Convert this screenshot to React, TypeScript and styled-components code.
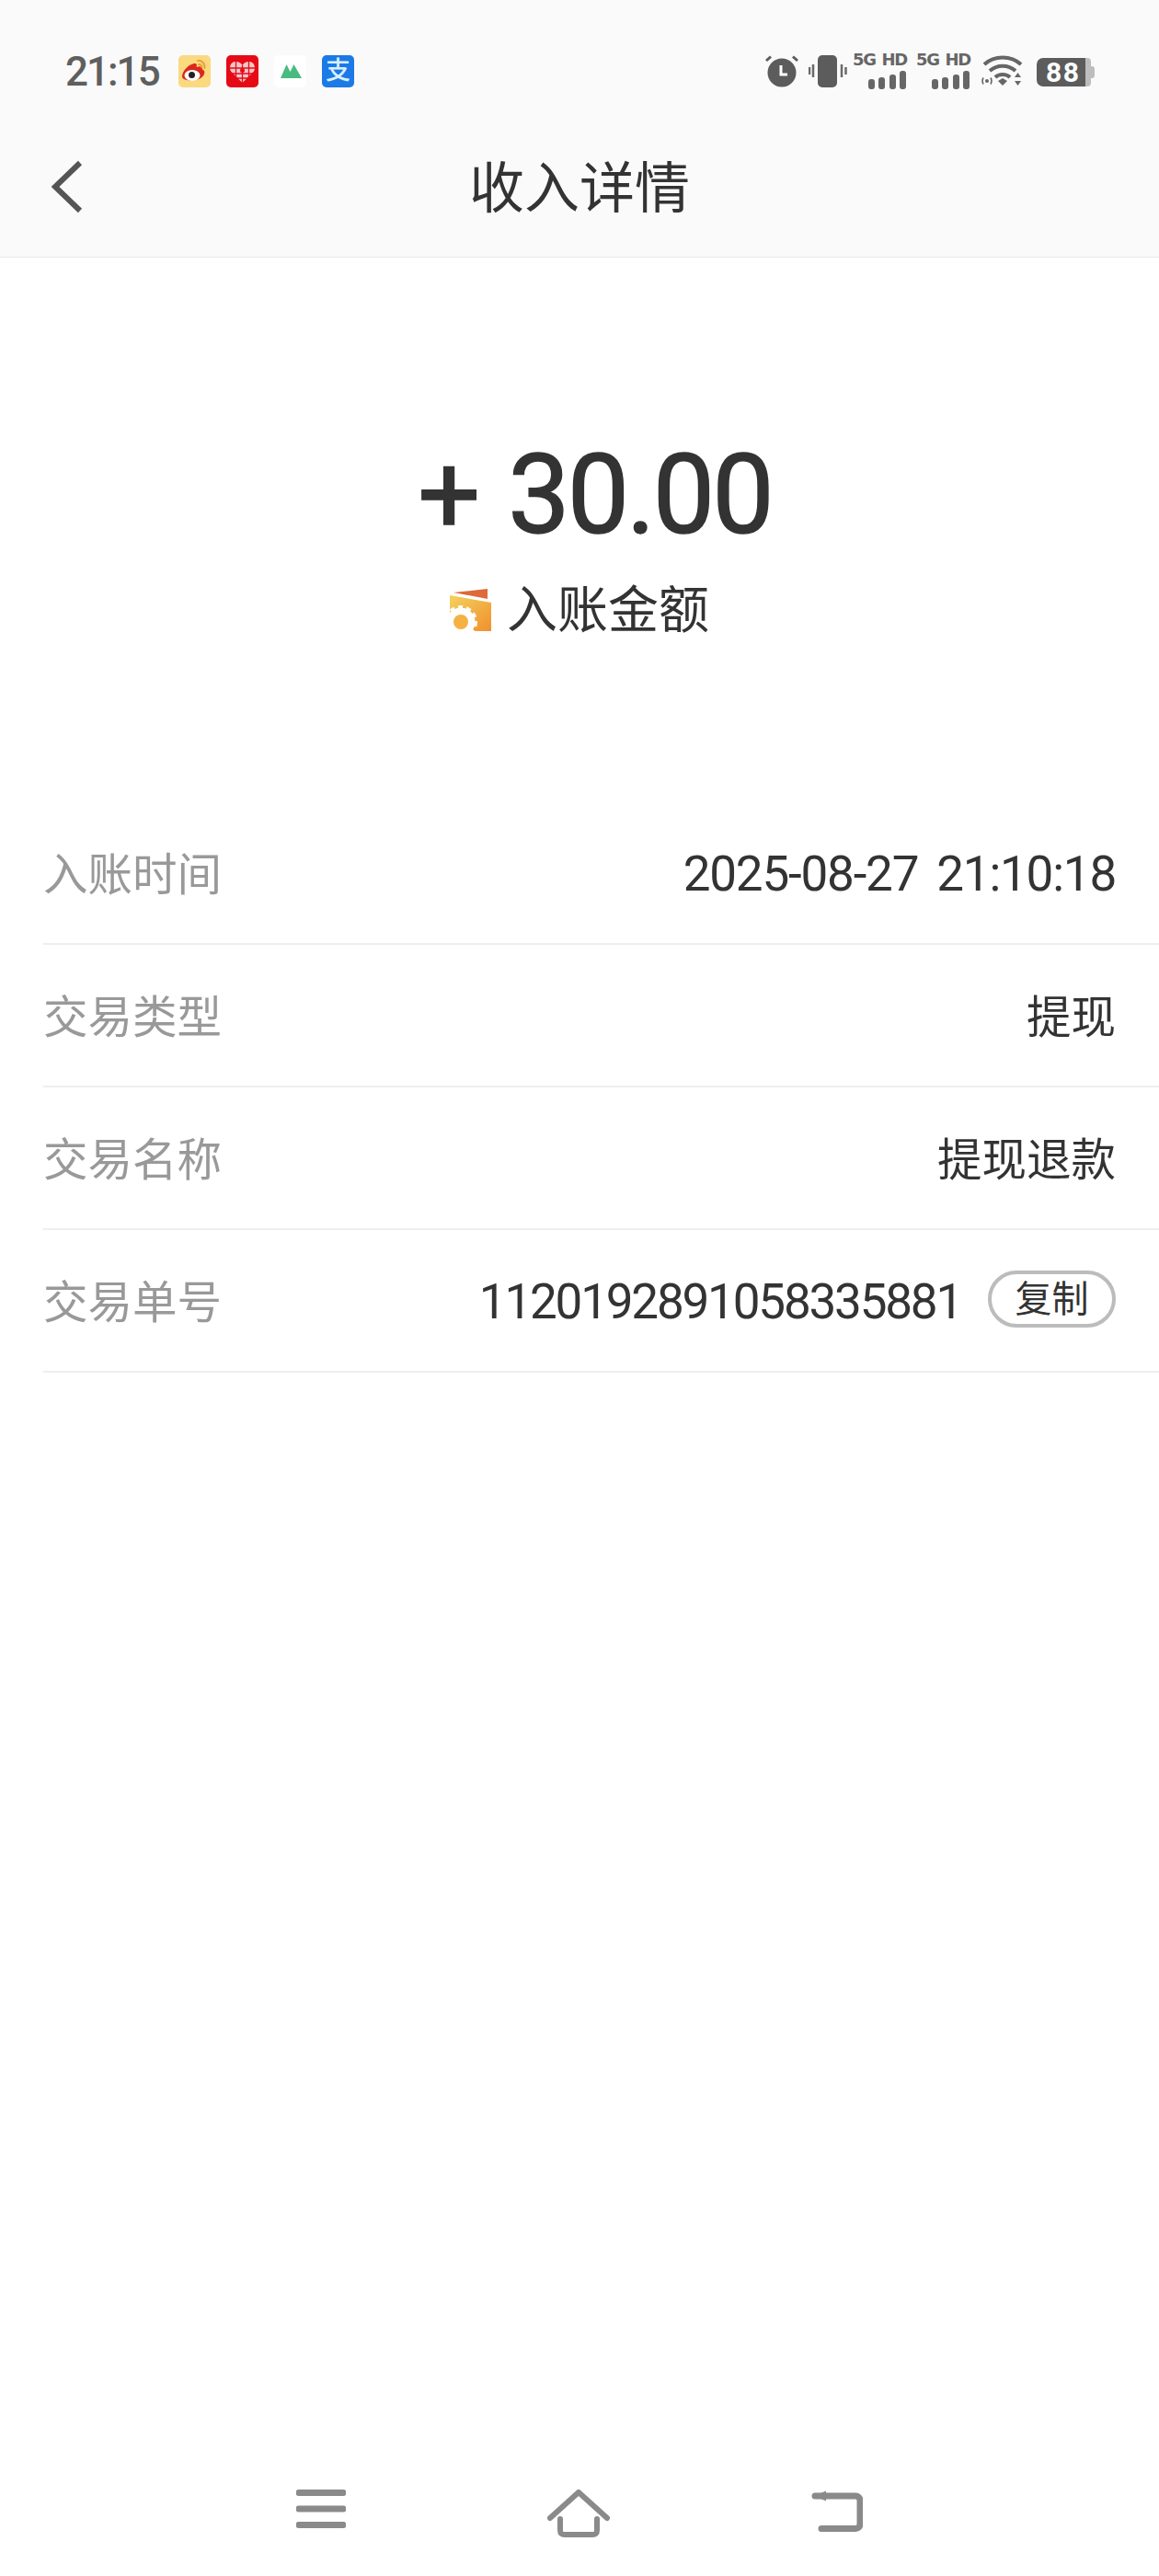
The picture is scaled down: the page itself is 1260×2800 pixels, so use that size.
import React from 'react';
import styled, { createGlobalStyle } from 'styled-components';

const GlobalStyle = createGlobalStyle`
  html, body {
    margin: 0;
    padding: 0;
    background: #ffffff;
  }
  * {
    box-sizing: border-box;
  }
`;

const FONT = `Roboto, "Noto Sans CJK SC", sans-serif`;

const Page = styled.div`
  width: 1260px;
  height: 2800px;
  display: flex;
  flex-direction: column;
  background: #ffffff;
  font-family: ${FONT};
  color: #333333;
`;

const Header = styled.header`
  height: 280px;
  background: #fafafa;
  border-bottom: 1px solid #e9e9e9;
  display: flex;
  flex-direction: column;
`;

const StatusBar = styled.div`
  height: 156px;
  padding: 56px 70px 0 71px;
  display: flex;
  align-items: flex-start;
  justify-content: space-between;
`;

const StatusGroup = styled.div`
  display: flex;
  align-items: flex-start;
`;

const Clock = styled.span`
  width: 123px;
  font-size: 44px;
  line-height: 44px;
  font-weight: 500;
  color: #5f5f5f;
  letter-spacing: -2px;
`;

const AppIcons = styled.div`
  display: flex;
  gap: 17px;
  margin-top: 4px;
`;

const AppIcon = styled.svg`
  width: 35px;
  height: 35px;
  display: block;
`;

const AlipayIcon = styled.div`
  width: 35px;
  height: 35px;
  border-radius: 5px;
  background: #1b7ae6;
  color: #d9efff;
  font-size: 27px;
  line-height: 34px;
  font-weight: 500;
  text-align: center;
`;

const SysIcons = styled.div`
  display: flex;
  align-items: flex-start;
  gap: 11px;
`;

const SysIcon = styled.svg<{ $pull?: number }>`
  display: block;
  margin-top: 4px;
  margin-right: ${(props) => props.$pull || 0}px;
`;

const Signal = styled.div`
  width: 58px;
  display: flex;
  flex-direction: column;
  align-items: flex-end;
`;

const SignalLabel = styled.span`
  font-family: "DejaVu Sans", sans-serif;
  font-size: 18px;
  line-height: 17px;
  font-weight: 700;
  color: #666666;
  letter-spacing: -1.3px;
  white-space: nowrap;
  word-spacing: 2px;
`;

const SignalBars = styled.svg`
  display: block;
  margin-top: 4px;
`;

const Battery = styled.div`
  width: 59px;
  height: 31px;
  margin: 7px 4px 0 3px;
  position: relative;
  border-radius: 7px 4px 4px 7px;
  background: linear-gradient(to right, #5c5c5c 90%, #bdbdbd 90%);
  color: #ffffff;
  font-size: 30px;
  line-height: 31px;
  font-weight: 700;
  padding-left: 10px;
  letter-spacing: 1.5px;

  &::after {
    content: '';
    position: absolute;
    right: -4px;
    top: 9px;
    width: 4px;
    height: 13px;
    border-radius: 0 3px 3px 0;
    background: #bdbdbd;
  }
`;

const NavBar = styled.div`
  flex: 1;
  position: relative;
  display: flex;
  align-items: center;
  justify-content: center;
  padding-bottom: 24px;
`;

const BackButton = styled.svg`
  position: absolute;
  left: 54px;
  top: 17px;
`;

const Title = styled.h1`
  margin: 0;
  font-size: 60px;
  line-height: 70px;
  font-weight: 400;
  color: #333333;
`;

const Summary = styled.section`
  height: 590px;
  padding-top: 198px;
  display: flex;
  flex-direction: column;
  align-items: center;
`;

const Amount = styled.div`
  padding-left: 33px;
  font-size: 120px;
  line-height: 120px;
  font-weight: 400;
  letter-spacing: -3px;
  word-spacing: 6px;
  -webkit-text-stroke: 1.4px #333333;
  color: #333333;
  white-space: pre;
`;

const AmountLabel = styled.div`
  margin-top: 29px;
  display: flex;
  align-items: center;
  gap: 16px;
  font-size: 55px;
  line-height: 72px;
`;

const DetailList = styled.section`
  padding-left: 47px;
  padding-top: 2px;
`;

const DetailRow = styled.div`
  height: 155px;
  padding-right: 47px;
  padding-bottom: 3px;
  border-bottom: 2px solid #eeeeee;
  display: flex;
  align-items: center;
  justify-content: space-between;
`;

const DetailLabel = styled.span`
  font-size: 48.5px;
  color: #999999;
`;

const DetailValue = styled.div`
  display: flex;
  align-items: center;
  gap: 29px;
  font-size: 48.5px;
  color: #333333;
`;

const NumberText = styled.span<{ $spacing: number; $wordGap?: number }>`
  font-size: 53px;
  line-height: 62px;
  padding-top: 6px;
  letter-spacing: ${(props) => props.$spacing}px;
  word-spacing: ${(props) => props.$wordGap || 0}px;
`;

const CopyButton = styled.button`
  width: 139px;
  height: 62px;
  padding: 2px 0 0;
  border: 4px solid #bcbcbc;
  border-radius: 31px;
  background: #ffffff;
  font-family: ${FONT};
  font-size: 40px;
  line-height: 52px;
  color: #333333;
`;

const BottomNav = styled.nav`
  margin-top: auto;
  height: 94px;
  display: flex;
  align-items: flex-start;
  justify-content: center;
  gap: 219px;
`;

const NavIcon = styled.svg`
  display: block;
  color: #8a8a8a;
`;

const WeiboIcon = () => (
  <AppIcon viewBox="0 0 35 35">
    <rect width="35" height="35" rx="5" fill="#fbd97f" />
    <path d="M4 23c0-6 7-13 13-14 3-.5 3.500 2 2.500 4 4-1.500 7-.5 6.500 2.500 2 1 3 2.500 2 5-1.500 4-7 7-13 7-6 0-11-1-11-4.500z" fill="#d9291c" />
    <ellipse cx="15" cy="22" rx="8.500" ry="6" fill="#ffffff" />
    <circle cx="14.500" cy="21.500" r="3.500" fill="#222222" />
    <path d="M21 6c4-1 8 3 7.500 8M22 10c2-.5 3.500 1 3.500 3.500" fill="none" stroke="#e9a13a" strokeWidth="2" strokeLinecap="round" />
  </AppIcon>
);

const PddIcon = () => (
  <AppIcon viewBox="0 0 35 35">
    <rect width="35" height="35" rx="5" fill="#e60a16" />
    <path d="M17.500 30 5 17.500C2.500 13 5 7 10 7c3.500 0 6 1.500 7.500 4 1.500-2.500 4-4 7.500-4 5 0 7.500 6 5 10.500z" fill="#f6c6c8" />
    <path d="M10.500 7v17M17.500 11v19M24.500 7v17M4 14h27M5 20h25M10 25h15" stroke="#e60a16" strokeWidth="1.300" fill="none" />
    <circle cx="17.500" cy="16.500" r="2.500" fill="#e60a16" />
  </AppIcon>
);

const PeakIcon = () => (
  <AppIcon viewBox="0 0 35 35">
    <rect width="35" height="35" rx="5" fill="#ffffff" />
    <path d="M7 25 13.500 10 17.500 18 21.500 10 30 25z" fill="#49bb7f" />
  </AppIcon>
);

const WalletIcon = () => (
  <svg width="46" height="46" viewBox="0 0 46 46" style={{ display: 'block' }}>
    <defs>
      <linearGradient id="walletBody" x1="0" y1="0" x2="1" y2="1">
        <stop offset="0" stopColor="#f4d25e" />
        <stop offset="1" stopColor="#f0902e" />
      </linearGradient>
    </defs>
    <path d="M4 4 41 0v11z" fill="#dd6a38" />
    <path d="M0 7 45 15v31H0z" fill="url(#walletBody)" />
    <circle cx="12" cy="36" r="13" fill="#fefefe" stroke="#fefefe" strokeWidth="5" />
    <circle cx="12" cy="36" r="16" fill="none" stroke="#fefefe" strokeWidth="4" strokeDasharray="5 4" />
    <circle cx="12" cy="36" r="8" fill="#f4b144" />
  </svg>
);

const SignalStack = () => (
  <Signal>
    <SignalLabel>5G HD</SignalLabel>
    <SignalBars width="42" height="20" viewBox="0 0 42 20">
      <rect x="0" y="9" width="7" height="11" rx="3" fill="#666666" />
      <rect x="11" y="7" width="7" height="13" rx="3" fill="#666666" />
      <rect x="23" y="4" width="7" height="16" rx="3" fill="#666666" />
      <rect x="34" y="0" width="7" height="20" rx="3" fill="#666666" />
    </SignalBars>
  </Signal>
);

export default function App() {
  return (
    <Page>
      <GlobalStyle />
      <Header>
        <StatusBar>
          <StatusGroup>
            <Clock>21:15</Clock>
            <AppIcons>
              <WeiboIcon />
              <PddIcon />
              <PeakIcon />
              <AlipayIcon>支</AlipayIcon>
            </AppIcons>
          </StatusGroup>
          <SysIcons>
            <SysIcon width="36" height="35" viewBox="0 0 36 35">
              <circle cx="18" cy="19" r="15.500" fill="#5c5c5c" />
              <path d="M1 6 6 1.500M35 6 30 1.500" stroke="#5c5c5c" strokeWidth="3" />
              <path d="M17 11v10h7" fill="none" stroke="#ffffff" strokeWidth="3" />
            </SysIcon>
            <SysIcon width="42" height="35" viewBox="0 0 42 35" $pull={-4}>
              <rect x="10" y="0" width="21" height="35" rx="5" fill="#5c5c5c" />
              <path d="M5 10v14M1 13v8M36 10v14M40.500 13v8" stroke="#6a6a6a" strokeWidth="2.500" />
            </SysIcon>
            <SignalStack />
            <SignalStack />
            <SysIcon width="47" height="35" viewBox="0 0 47 35">
              <path d="M4 10C15 0 33 0 44 10M10 17C18 10 30 10 38 17M16 24C20 20 28 20 32 24" fill="none" stroke="#666666" strokeWidth="4" />
              <path d="M19 28 24 25 29 28 24 33z" fill="#666666" />
              <path d="M37 24 40.500 19 44 24zM37 28H44L40.500 33z" fill="#666666" />
              <circle cx="7" cy="28" r="2" fill="#666666" />
              <path d="M3 24.500C1.500 27 1.500 29 3 31.500M11 24.500C12.500 27 12.500 29 11 31.500" fill="none" stroke="#666666" strokeWidth="1.500" />
            </SysIcon>
            <Battery>88</Battery>
          </SysIcons>
        </StatusBar>
        <NavBar>
          <BackButton width="38" height="60" viewBox="0 0 38 60">
            <path d="M33 4 6 30l27 26" fill="none" stroke="#555555" strokeWidth="6" />
          </BackButton>
          <Title>收入详情</Title>
        </NavBar>
      </Header>

      <Summary>
        <Amount>+ 30.00</Amount>
        <AmountLabel>
          <WalletIcon />
          入账金额
        </AmountLabel>
      </Summary>

      <DetailList>
        <DetailRow>
          <DetailLabel>入账时间</DetailLabel>
          <DetailValue>
            <NumberText $spacing={-1.2} $wordGap={8}>2025-08-27 21:10:18</NumberText>
          </DetailValue>
        </DetailRow>
        <DetailRow>
          <DetailLabel>交易类型</DetailLabel>
          <DetailValue>提现</DetailValue>
        </DetailRow>
        <DetailRow>
          <DetailLabel>交易名称</DetailLabel>
          <DetailValue>提现退款</DetailValue>
        </DetailRow>
        <DetailRow>
          <DetailLabel>交易单号</DetailLabel>
          <DetailValue>
            <NumberText $spacing={-2.2}>1120192891058335881</NumberText>
            <CopyButton>复制</CopyButton>
          </DetailValue>
        </DetailRow>
      </DetailList>

      <BottomNav>
        <NavIcon width="54" height="42" viewBox="0 0 54 42">
          <path d="M3 3.500h48M3 21h48M3 38.500h48" stroke="currentColor" strokeWidth="7" strokeLinecap="round" />
        </NavIcon>
        <NavIcon width="68" height="52" viewBox="0 0 68 52">
          <path d="M3 31 34 3l31 28" fill="none" stroke="currentColor" strokeWidth="6" strokeLinecap="round" strokeLinejoin="round" />
          <path d="M14 32v12c0 4 2 5 5 5h30c3 0 5-1 5-5V32" fill="none" stroke="currentColor" strokeWidth="6" strokeLinecap="round" />
        </NavIcon>
        <NavIcon width="56" height="46" viewBox="0 0 56 46">
          <path d="M11 42.500h37c3 0 5-2 5-5V12c0-3-2-5-5-5H4" fill="none" stroke="currentColor" strokeWidth="7" strokeLinecap="round" />
          <path d="M3 7 16 1.500v11z" fill="currentColor" />
        </NavIcon>
      </BottomNav>
    </Page>
  );
}
